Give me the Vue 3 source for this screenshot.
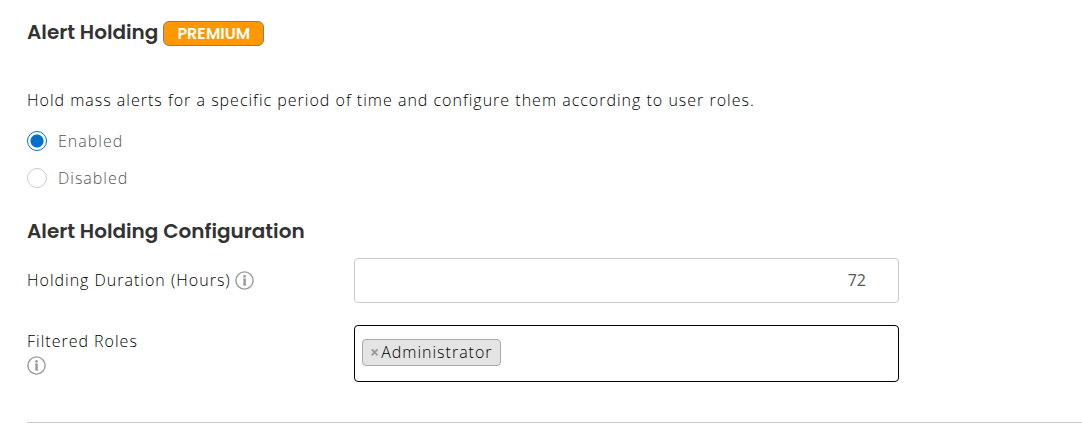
<script setup>
import { ref } from 'vue'

const mode = ref('enabled')
const hours = ref('72')
const roles = ref(['Administrator'])
const search = ref('')

const options = [
  { value: 'enabled', label: 'Enabled' },
  { value: 'disabled', label: 'Disabled' },
]

function removeRole(role) {
  roles.value = roles.value.filter((r) => r !== role)
}
</script>

<template>
  <main class="settings">
    <header class="title-row">
      <h2 class="heading">Alert Holding</h2>
      <span class="badge">PREMIUM</span>
    </header>

    <p class="intro">Hold mass alerts for a specific period of time and configure them according to user roles.</p>

    <div class="options" role="radiogroup" aria-label="Alert Holding">
      <label v-for="o in options" :key="o.value" class="option">
        <input v-model="mode" class="radio" type="radio" name="mode" :value="o.value" />
        <span>{{ o.label }}</span>
      </label>
    </div>

    <h3 class="heading config-heading">Alert Holding Configuration</h3>

    <div class="row">
      <div class="label-cell inline">
        <label for="hours">Holding Duration (Hours)</label>
        <button class="info" type="button" aria-label="About holding duration">
          <svg viewBox="0 0 19 19" width="19" height="19">
            <circle cx="9.5" cy="9.5" r="8.6" fill="none" stroke="#999" stroke-width="1.4" />
            <circle cx="9.5" cy="5.4" r="1.3" fill="#999" />
            <path d="M8 7.6h2.8v5.8h.6v1H8v-1h.4V8.6H8z" fill="#999" />
          </svg>
        </button>
      </div>
      <input id="hours" v-model="hours" class="hours" type="text" inputmode="numeric" />
    </div>

    <div class="row roles-row">
      <div class="label-cell">
        <label for="roles">Filtered Roles</label>
        <button class="info" type="button" aria-label="About filtered roles">
          <svg viewBox="0 0 19 19" width="19" height="19">
            <circle cx="9.5" cy="9.5" r="8.6" fill="none" stroke="#999" stroke-width="1.4" />
            <circle cx="9.5" cy="5.4" r="1.3" fill="#999" />
            <path d="M8 7.6h2.8v5.8h.6v1H8v-1h.4V8.6H8z" fill="#999" />
          </svg>
        </button>
      </div>
      <div class="roles">
        <span v-for="role in roles" :key="role" class="chip">
          <button class="remove" type="button" :aria-label="'Remove ' + role" @click="removeRole(role)">×</button>
          <span>{{ role }}</span>
        </span>
        <input id="roles" v-model="search" class="search" type="text" />
      </div>
    </div>

    <hr class="rule" />
  </main>
</template>

<style>
body {
  margin: 0;
  background: #fff;
}
</style>

<style scoped>
.settings {
  padding: 20px 0 12px 27px;
  font-family: "Open Sans", sans-serif;
  font-size: 16px;
  line-height: 24px;
  font-weight: 300;
  letter-spacing: 1px;
  color: #000;
}

.title-row {
  display: flex;
  align-items: flex-start;
  gap: 5px;
}

.heading {
  margin: 0;
  font-family: Poppins, Inter, sans-serif;
  font-size: 20px;
  line-height: 24px;
  font-weight: 600;
  letter-spacing: normal;
  color: #333;
}

.badge {
  box-sizing: border-box;
  height: 25px;
  margin-top: 1px;
  padding: 0 13px;
  border: 1px solid #808080;
  border-radius: 6px;
  background: #ff9800;
  color: #fff;
  font-family: Poppins, Inter, sans-serif;
  font-size: 16px;
  line-height: 24px;
  font-weight: 600;
  letter-spacing: normal;
}

.intro {
  margin: 42px 0 0;
}

.options {
  display: flex;
  flex-direction: column;
  gap: 13px;
  margin-top: 17px;
}

.option {
  display: flex;
  align-items: center;
  gap: 11px;
  color: #555;
}

.radio {
  appearance: none;
  box-sizing: border-box;
  width: 20px;
  height: 20px;
  margin: 0;
  border: 1px solid #ccc;
  border-radius: 50%;
  background: #fff;
}

.radio:checked {
  border-color: #0070c9;
  background: radial-gradient(circle, #0070c9 6px, #fff 7px);
}

.config-heading {
  margin-top: 29px;
}

.row {
  display: grid;
  grid-template-columns: 327fr 545fr 183fr;
  margin-top: 15px;
}

.roles-row {
  margin-top: 22px;
}

.label-cell {
  display: flex;
  flex-direction: column;
  align-items: flex-start;
  padding-top: 4px;
}

.inline {
  flex-direction: row;
  gap: 4px;
  padding-top: 10px;
}

.info {
  display: flex;
  margin: 3px 0 0;
  padding: 0;
  border: 0;
  background: none;
}

.hours {
  box-sizing: border-box;
  width: 100%;
  height: 45px;
  padding: 0 32px 2px;
  border: 1px solid #ccc;
  border-radius: 4px;
  background: #fff;
  color: #555;
  font: inherit;
  font-weight: 400;
  letter-spacing: normal;
  text-align: right;
}

.roles {
  box-sizing: border-box;
  display: flex;
  align-items: flex-start;
  min-height: 57px;
  padding: 13px 7px;
  border: 1px solid #000;
  border-radius: 4px;
}

.chip {
  display: flex;
  align-items: center;
  gap: 2px;
  padding: 0 7px;
  border: 1px solid #aaa;
  border-radius: 4px;
  background: #e4e4e4;
  line-height: 25px;
}

.remove {
  padding: 0;
  border: 0;
  background: none;
  color: #999;
  font: inherit;
  font-weight: 700;
}

.search {
  flex: 1;
  min-width: 0;
  height: 26px;
  padding: 0 4px;
  border: 0;
  outline: 0;
  background: none;
  font: inherit;
}

.rule {
  height: 1px;
  margin: 40px 0 0;
  border: 0;
  background: #ccc;
}
</style>
